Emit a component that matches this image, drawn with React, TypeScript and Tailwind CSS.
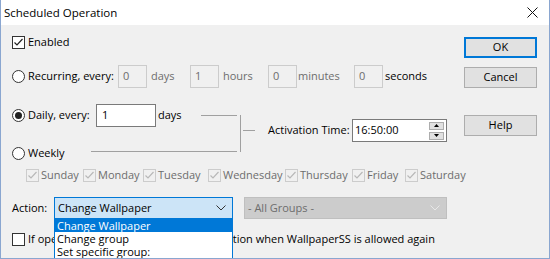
import React from 'react';

const font = { fontFamily: '"Open Sans", "Liberation Sans", sans-serif' };

const Check: React.FC<{ checked?: boolean; disabled?: boolean }> = ({ checked, disabled }) => (
    <div className={`w-[13px] h-[13px] shrink-0 border flex items-center justify-center ${disabled ? 'border-[#cccccc] bg-[#f0f0f0]' : 'border-[#333333] bg-white'}`}>
        {checked && (
            <svg width="11" height="11" viewBox="0 0 11 11">
                <polyline points="1.5,5.5 4,8 9.5,2" fill="none" stroke={disabled ? '#b8b8b8' : '#222222'} strokeWidth="1.2" />
            </svg>
        )}
    </div>
);

const Radio: React.FC<{ checked?: boolean }> = ({ checked }) => (
    <div className="w-[13px] h-[13px] shrink-0 rounded-full border border-[#333333] bg-white flex items-center justify-center">
        {checked && <div className="w-[7px] h-[7px] rounded-full bg-[#222222]" />}
    </div>
);

const SmallBox: React.FC<{ value: string }> = ({ value }) => (
    <div className="w-[29px] h-[23px] shrink-0 border border-[#cccccc] bg-[#f0f0f0] text-[#6d6d6d] pl-[4px] flex items-center">{value}</div>
);

const Chevron: React.FC<{ color: string }> = ({ color }) => (
    <svg width="10" height="6" viewBox="0 0 10 6">
        <polyline points="0.5,0.5 5,5 9.5,0.5" fill="none" stroke={color} strokeWidth="1" />
    </svg>
);

const Button: React.FC<{ label: string; primary?: boolean }> = ({ label, primary }) => (
    <div className={`w-[73px] h-[21px] flex items-center justify-center bg-[#e1e1e1] text-black ${primary ? 'border-2 border-[#0078d7]' : 'border border-[#adadad]'}`}>
        {label}
    </div>
);

const days = [
    { name: 'Sunday', w: 'w-[57px]' },
    { name: 'Monday', w: 'w-[60px]' },
    { name: 'Tuesday', w: 'w-[65px]' },
    { name: 'Wednesday', w: 'w-[77px]' },
    { name: 'Thursday', w: 'w-[67px]' },
    { name: 'Friday', w: 'w-[53px]' },
    { name: 'Saturday', w: 'w-[60px]' },
];

export default function App() {
    return (
        <div style={font} className="w-[550px] h-[259px] overflow-hidden flex flex-col bg-[#f0f0f0] text-[11px] text-black border-x border-b border-[#8aa6d0] whitespace-nowrap">
            {/* title bar */}
            <div className="h-[25px] shrink-0 bg-white flex items-center justify-between pl-[3px] pr-[11px]">
                <span className="text-[11.5px]">Scheduled Operation</span>
                <svg width="11" height="11" viewBox="0 0 11 11">
                    <path d="M0.5 0.5 L10.5 10.5 M10.5 0.5 L0.5 10.5" stroke="#111" strokeWidth="1" />
                </svg>
            </div>

            <div className="flex flex-1 pl-[11px] pr-[12px]">
                <div className="flex-1 min-w-0 flex flex-col">
                    {/* Enabled */}
                    <div className="mt-[11px] h-[13px] flex items-center gap-[3px]">
                        <Check checked />
                        <span>Enabled</span>
                    </div>

                    {/* Recurring */}
                    <div className="mt-[16px] h-[23px] flex items-center">
                        <div className="w-[106px] flex items-center gap-[3px]">
                            <Radio />
                            <span>Recurring, every:</span>
                        </div>
                        <SmallBox value="0" />
                        <span className="ml-[4px] w-[39px] text-[#6d6d6d]">days</span>
                        <SmallBox value="1" />
                        <span className="ml-[4px] w-[45px] text-[#6d6d6d]">hours</span>
                        <SmallBox value="0" />
                        <span className="ml-[1px] w-[56px] text-[#6d6d6d]">minutes</span>
                        <SmallBox value="0" />
                        <span className="ml-[2px]">seconds</span>
                    </div>

                    {/* Daily / Weekly + activation time */}
                    <div className="mt-[16px] flex">
                        <div className="w-[225px] shrink-0 flex flex-col">
                            <div className="h-[23px] flex items-center">
                                <div className="w-[84px] flex items-center gap-[3px]">
                                    <Radio checked />
                                    <span>Daily, every:</span>
                                </div>
                                <div className="w-[60px] h-[23px] border border-[#7a7a7a] bg-white pl-[5px] flex items-center">1</div>
                                <span className="ml-[2px] w-[43px]">days</span>
                                <div className="flex-1 h-px bg-[#a0a0a0]" />
                            </div>
                            <div className="mt-[20px] h-[13px] flex items-center">
                                <div className="w-[79px] flex items-center gap-[3px]">
                                    <Radio />
                                    <span>Weekly</span>
                                </div>
                                <div className="flex-1 h-px mt-[-4px] bg-[#a0a0a0]" />
                            </div>
                        </div>
                        <div className="ml-[3px] mt-[11px] h-[37px] w-px bg-[#a0a0a0]" />
                        <div className="mt-[15px] h-[23px] flex items-center">
                            <div className="ml-[2px] w-[12px] h-px bg-[#a0a0a0]" />
                            <span className="ml-[13px] w-[84px]">Activation Time:</span>
                            <div className="w-[95px] h-[23px] border border-[#7a7a7a] bg-white flex items-center justify-between pl-[2px] pr-[2px]">
                                <span>16:50:00</span>
                                <div className="flex flex-col gap-[2px]">
                                    <div className="w-[15px] h-[8px] bg-[#e1e1e1] border border-[#adadad] flex items-center justify-center">
                                        <svg width="5" height="3" viewBox="0 0 5 3"><polygon points="0,3 5,3 2.5,0" fill="#000" /></svg>
                                    </div>
                                    <div className="w-[15px] h-[8px] bg-[#e1e1e1] border border-[#adadad] flex items-center justify-center">
                                        <svg width="5" height="3" viewBox="0 0 5 3"><polygon points="0,0 5,0 2.5,3" fill="#000" /></svg>
                                    </div>
                                </div>
                            </div>
                        </div>
                    </div>

                    {/* Days */}
                    <div className="mt-[9px] h-[13px] pl-[14px] flex items-center">
                        {days.map(d => (
                            <div key={d.name} className={`${d.w} shrink-0 flex items-center gap-[2px] text-[#6d6d6d]`}>
                                <Check checked disabled />
                                <span>{d.name}</span>
                            </div>
                        ))}
                    </div>

                    {/* Action */}
                    <div className="mt-[15px] h-[22px] flex items-center">
                        <span className="w-[42px]">Action:</span>
                        <div className="relative w-[179px] h-[22px]">
                            <div className="h-full border border-[#0078d7] bg-[#cce4f7] flex items-center justify-between pl-[3px] pr-[6px]">
                                <span>Change Wallpaper</span>
                                <Chevron color="#333" />
                            </div>
                            <div className="absolute left-0 top-full w-[179px] h-[42px] border border-[#0078d7] border-t-0 bg-white z-10 flex flex-col">
                                <div className="h-[13px] bg-[#0078d7] text-white leading-[13px] pl-[2px]">Change Wallpaper</div>
                                <div className="h-[13px] leading-[13px] pl-[2px]">Change group</div>
                                <div className="h-[13px] leading-[13px] pl-[2px]">Set specific group:</div>
                            </div>
                        </div>
                        <div className="ml-[11px] w-[203px] h-[22px] border border-[#bfbfbf] bg-[#cccccc] text-[#6d6d6d] flex items-center justify-between pl-[3px] pr-[6px]">
                            <span>- All Groups -</span>
                            <Chevron color="#e8e8e8" />
                        </div>
                    </div>

                    {/* bottom checkbox */}
                    <div className="mt-[14px] h-[13px] flex items-center gap-[3px]">
                        <Check />
                        <span>If operation was missed, retry the operation when WallpaperSS is allowed again</span>
                    </div>
                </div>

                {/* buttons */}
                <div className="w-[73px] shrink-0 flex flex-col">
                    <div className="mt-[12px]"><Button label="OK" primary /></div>
                    <div className="mt-[9px]"><Button label="Cancel" /></div>
                    <div className="mt-[27px]"><Button label="Help" /></div>
                </div>
            </div>
        </div>
    );
}
